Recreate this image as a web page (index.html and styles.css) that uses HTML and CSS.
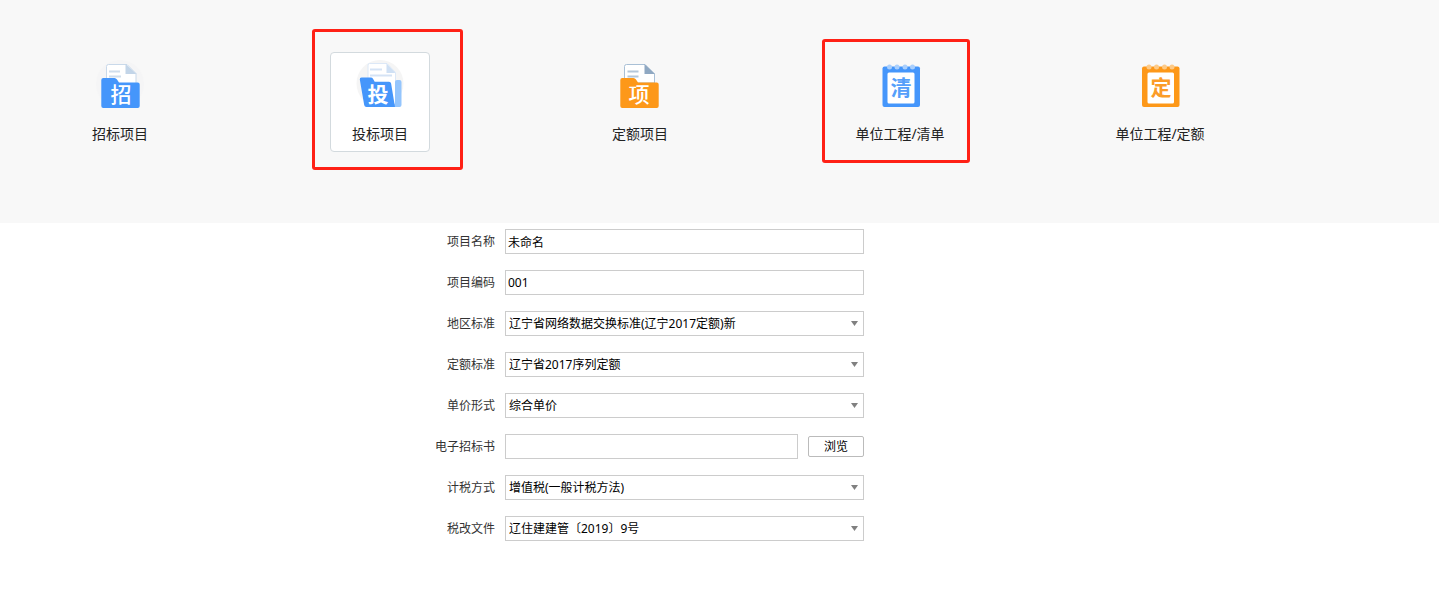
FILE: index.html
```html
<!DOCTYPE html>
<html lang="zh-CN">
<head>
<meta charset="utf-8">
<title>新建项目</title>
<link rel="stylesheet" href="styles.css">
</head>
<body>
<nav class="types">
  <button class="tile" type="button">
    <svg class="icon" viewBox="0 0 48 50" aria-hidden="true">
      <circle cx="24" cy="25" r="24" fill="#f5f5f6"/>
      <path d="M10.500 22V7.500q0-2 2-2H31l9 9v10H10.500z" fill="#fff" stroke="#c9d9ea"/>
      <path d="M29.500 5L40.500 15H29.500z" fill="#c3d5e8"/>
      <path d="M13 12.500h11M13 17.500h12" stroke="#d0deec" stroke-width="2"/>
      <path d="M5.300 21q0-2 2-2H18.500q1.500 0 2.500 1.500l2 3H41.700q2 0 2 2V47q0 2-2 2H7.300q-2 0-2-2z" fill="#4596fb"/>
      <text class="glyph" x="25" y="43" fill="#fff">招</text>
    </svg>
    <span class="name">招标项目</span>
  </button>
  <button class="tile selected" type="button" aria-pressed="true">
    <svg class="icon" viewBox="0 0 48 50" aria-hidden="true">
      <circle cx="24" cy="24.500" r="23.500" fill="#f5f5f5"/>
      <path d="M12 24V6q0-1.500 1.500-1.500H31l8.500 9v32H12z" fill="#fff" stroke="#dce8f7"/>
      <path d="M30.500 4.500L39.500 14H30.500z" fill="#cfe0f4"/>
      <path d="M14 10.500h12M14 16.500h22" stroke="#d5e3f5" stroke-width="2"/>
      <path d="M37 48l2-4V23q0-2 2-2h2.500q2 0 2 2v23q0 2-2 2z" fill="#94c5fd"/>
      <path d="M3.800 20.500q-.3-2 1.700-2h9.500q1.300 0 2 1.200l1.700 3H33q1.800 0 2.100 1.800L39 48H10.500q-2 0-2.300-2z" fill="#4596fb"/>
      <text class="glyph heavy" x="22" y="43" fill="#fff">投</text>
    </svg>
    <span class="name">投标项目</span>
  </button>
  <button class="tile" type="button">
    <svg class="icon" viewBox="0 0 48 50" aria-hidden="true">
      <path d="M8.500 22V7.500q0-2 2-2H29l9.500 9.500v9H8.500z" fill="#fff" stroke="#a9c0d6"/>
      <path d="M28.500 5L39 15H28.500z" fill="#8fa8c2"/>
      <path d="M11.500 12.500h11M11.500 17.500h11" stroke="#b4c7da" stroke-width="2"/>
      <path d="M4.300 21q0-2 2-2H17.500q1.500 0 2.500 1.500l2 3H40.700q2 0 2 2V47q0 2-2 2H6.300q-2 0-2-2z" fill="#fd9819"/>
      <text class="glyph" x="23" y="43" fill="#fff">项</text>
    </svg>
    <span class="name">定额项目</span>
  </button>
  <button class="tile" type="button">
    <svg class="icon" viewBox="0 0 48 50" aria-hidden="true">
      <rect x="6.500" y="7.500" width="37.500" height="40.500" rx="2" fill="#4596fb"/>
      <rect x="11.500" y="13.500" width="27" height="31" rx="1.500" fill="#fff"/>
      <g fill="#a9cffd"><circle cx="13.500" cy="8" r="2.500"/><circle cx="21" cy="8" r="2.500"/><circle cx="29" cy="8" r="2.500"/><circle cx="36.500" cy="8" r="2.500"/></g>
      <text class="glyph heavy" x="25" y="36" fill="#559ffa">清</text>
    </svg>
    <span class="name">单位工程/清单</span>
  </button>
  <button class="tile" type="button">
    <svg class="icon" viewBox="0 0 48 50" aria-hidden="true">
      <rect x="6" y="7.500" width="37.500" height="40.500" rx="2" fill="#fd9819"/>
      <rect x="11.500" y="13.500" width="26.500" height="31" rx="1.500" fill="#fff"/>
      <g fill="#fdca87"><circle cx="13" cy="8" r="2.500"/><circle cx="20.500" cy="8" r="2.500"/><circle cx="28.500" cy="8" r="2.500"/><circle cx="36" cy="8" r="2.500"/></g>
      <text class="glyph heavy" x="25" y="36" fill="#fb9c28">定</text>
    </svg>
    <span class="name">单位工程/定额</span>
  </button>
  <div class="mark mark-bid"></div>
  <div class="mark mark-list"></div>
</nav>
<form class="form">
  <label for="name">项目名称</label>
  <input class="field" id="name" type="text" value="未命名">
  <label for="code">项目编码</label>
  <input class="field" id="code" type="text" value="001">
  <label for="region">地区标准</label>
  <select class="field" id="region"><option>辽宁省网络数据交换标准(辽宁2017定额)新</option></select>
  <label for="quota">定额标准</label>
  <select class="field" id="quota"><option>辽宁省2017序列定额</option></select>
  <label for="price">单价形式</label>
  <select class="field" id="price"><option>综合单价</option></select>
  <label for="doc">电子招标书</label>
  <div class="file"><input class="field" id="doc" type="text"><button class="browse" type="button">浏览</button></div>
  <label for="tax">计税方式</label>
  <select class="field" id="tax"><option>增值税(一般计税方法)</option></select>
  <label for="taxdoc">税改文件</label>
  <select class="field" id="taxdoc"><option>辽住建建管〔2019〕9号</option></select>
</form>
</body>
</html>
```
FILE: styles.css
```css
* { box-sizing: border-box; }
body {
  margin: 0;
  background: #fff;
  color: #333;
  font: 12px/16px "Noto Sans", "Noto Sans CJK SC", sans-serif;
}
button, input, select { font: inherit; }

.types {
  position: relative;
  display: flex;
  gap: 160px;
  padding: 52px 70px 71px;
  background: #f8f8f8;
}
.tile {
  display: flex;
  flex: none;
  flex-direction: column;
  align-items: center;
  gap: 15px;
  width: 100px;
  height: 100px;
  padding: 6px 0 0;
  border: 1px solid transparent;
  border-radius: 4px;
  background: none;
  color: #222;
}
.selected { border-color: #d3dade; background: #fff; }
.icon { display: block; width: 48px; height: 50px; }
.name { font-size: 14px; line-height: 20px; white-space: nowrap; }
.glyph {
  font: 500 21px "Noto Sans CJK SC", sans-serif;
  text-anchor: middle;
}
.heavy { font-weight: 700; }

.mark {
  position: absolute;
  border: 3px solid #ff2116;
  border-radius: 3px;
  pointer-events: none;
}
.mark-bid { left: 312px; top: 29px; width: 151px; height: 141px; }
.mark-list { left: 822px; top: 39px; width: 148px; height: 124px; }

.form {
  display: grid;
  grid-template-columns: 61px minmax(0, 359px);
  align-items: center;
  gap: 16px 10px;
  padding: 6px 16px 32px 434px;
}
.form label { text-align: right; white-space: nowrap; }
.field {
  width: 100%;
  min-width: 0;
  height: 25px;
  margin: 0;
  padding: 0 2px;
  border: 1px solid #ccc;
  border-radius: 0;
  background: #fff;
  color: #000;
}
select.field {
  appearance: none;
  padding: 0 3px;
  background: #fff url("data:image/svg+xml,%3Csvg xmlns='http://www.w3.org/2000/svg' width='7' height='5'%3E%3Cpath d='M0 0h7L3.500 5z' fill='%23808080'/%3E%3C/svg%3E") no-repeat right 5px center;
}
.file { display: flex; align-items: center; gap: 10px; }
.file .field { flex: 1; }
.browse {
  width: 56px;
  height: 21px;
  padding: 0;
  border: 1px solid #bbb;
  border-radius: 2px;
  background: #fff;
  color: #000;
  line-height: 16px;
}
```
